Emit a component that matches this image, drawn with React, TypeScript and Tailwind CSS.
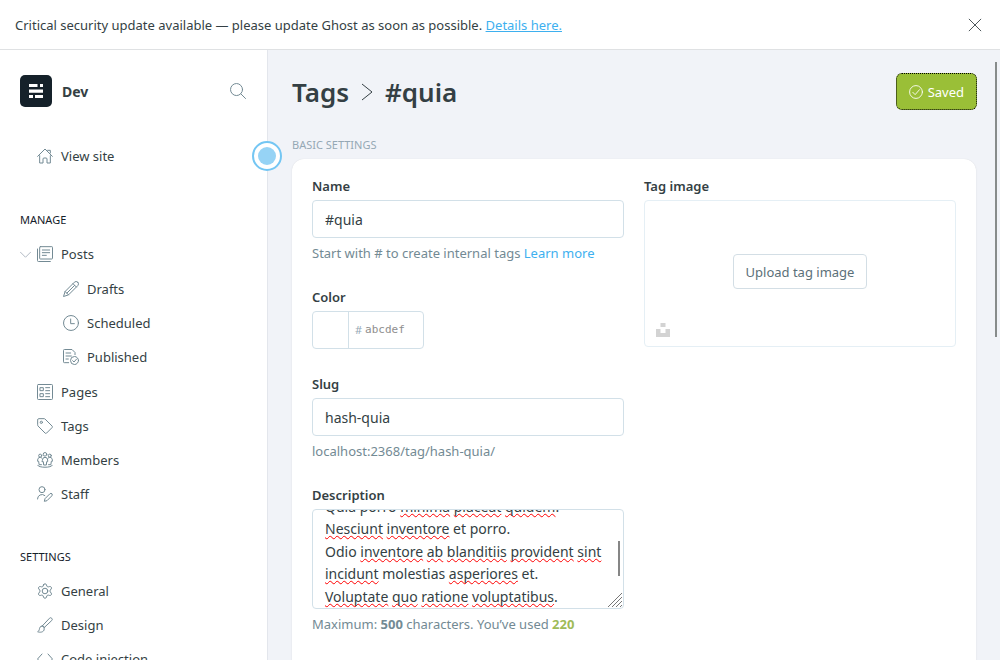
import { useLayoutEffect, useRef, useState } from "react";
import type { ReactNode } from "react";

type IconProps = { children: ReactNode; className?: string };

function Icon({ children, className = "size-4" }: IconProps) {
  return (
    <svg
      viewBox="0 0 24 24"
      fill="none"
      stroke="currentColor"
      strokeWidth="1.5"
      strokeLinecap="round"
      strokeLinejoin="round"
      aria-hidden="true"
      className={`shrink-0 ${className}`}
    >
      {children}
    </svg>
  );
}

const icons = {
  home: (
    <>
      <path d="M1 12.5 12 1.5l11 11" />
      <path d="M4 11.5V22.5h5v-6a1.5 1.5 0 0 1 1.500-1.500h3a1.500 1.500 0 0 1 1.500 1.500v6h5V11.500" />
      <path d="M16 3.500h4v4" />
    </>
  ),
  posts: (
    <>
      <rect x="4" y="1" width="19.250" height="18.500" rx="1" />
      <path d="M.75 4.500V22a1.250 1.250 0 0 0 1.250 1.250h18M8 6h11M8 10h11M8 14h6" />
    </>
  ),
  drafts: (
    <>
      <path d="M22.200 1.800a3.600 3.600 0 0 0-5.100 0L3.200 15.700.75 23.250l7.550-2.450L22.200 6.900a3.600 3.600 0 0 0 0-5.100Z" />
      <path d="m15 4 5 5M3.200 15.700l5.100 5.100M5.800 18.200 17.500 6.500" />
    </>
  ),
  scheduled: (
    <>
      <circle cx="12" cy="12" r="11.200" />
      <path d="M11.500 6v7H17" />
    </>
  ),
  published: (
    <>
      <path d="M8.500 20.500H2A1.250 1.250 0 0 1 .75 19.250V2A1.250 1.250 0 0 1 2 .75h11.500L18 5.250V8.500M4.500 6h7M4.500 10.500h8M4.500 15H8" />
      <circle cx="17.250" cy="17.250" r="6" />
      <path d="m14.500 17.500 2 2 3.800-4.300" />
    </>
  ),
  pages: (
    <>
      <rect x=".75" y=".75" width="22.500" height="22.500" rx="1.250" />
      <path d="M5 5.500h4.500V10H5zM5 14.500h4.500V19H5zM13 5.500h6M13 10h6M13 14.500h6M13 19h6" />
    </>
  ),
  tags: (
    <>
      <path d="M1 2.500A1.500 1.500 0 0 1 2.500 1h8.200c.5 0 1 .2 1.400.6L22.700 12.200a1.500 1.500 0 0 1 0 2.100l-8.400 8.400a1.500 1.500 0 0 1-2.100 0L1.600 12.100c-.4-.4-.6-.9-.6-1.400Z" />
      <circle cx="6.500" cy="6.500" r="1.700" />
    </>
  ),
  members: (
    <>
      <circle cx="12" cy="3.500" r="2.700" />
      <circle cx="4.800" cy="5.500" r="2.300" />
      <circle cx="19.200" cy="5.500" r="2.300" />
      <path d="M8 12a4 4 0 0 1 8 0v2.500h-1.500L14 19.500h-4l-.5-5H8ZM7 8.800a3.700 3.700 0 0 0-6 3v2.200h1.500l.7 5h3.500M17 8.800a3.700 3.700 0 0 1 6 3v2.200h-1.500l-.7 5h-3.500M1 20c1 4 21 4 22 0" />
    </>
  ),
  staff: (
    <>
      <circle cx="7.500" cy="5.500" r="4.500" />
      <path d="M.75 19.500a6.750 6.750 0 0 1 11-5.200M22.300 11.700a2.100 2.100 0 0 0-3 0l-7.300 7.300-1 4 4-1 7.300-7.300a2.100 2.100 0 0 0 0-3Z" />
    </>
  ),
  general: (
    <>
      <path d="m9.800 2.700-.5 1.800c-.3 1-1.400 1.600-2.400 1.300L5 5.300c-2.100-.5-3.700 2.100-2.200 3.700l1.300 1.600c.7.800.7 2 0 2.800L2.800 15c-1.500 1.600.1 4.200 2.200 3.700l1.900-.5c1-.3 2.100.3 2.400 1.300l.5 1.800c.6 2.100 3.800 2.100 4.400 0l.5-1.800c.3-1 1.400-1.600 2.400-1.300l1.900.5c2.100.5 3.700-2.100 2.200-3.700l-1.300-1.600c-.7-.8-.7-2 0-2.800L21.200 9c1.500-1.600-.1-4.200-2.200-3.700l-1.900.5c-1 .3-2.100-.3-2.400-1.300l-.5-1.800c-.6-2.100-3.800-2.100-4.400 0Z" />
      <circle cx="12" cy="12" r="4.200" />
    </>
  ),
  design: (
    <>
      <path d="M8.500 12.800 18.700 1.900a2.400 2.400 0 0 1 3.400 3.400L11.200 15.500M8.500 12.800l2.700 2.700M7.800 13.500a4.100 4.100 0 0 0-4 3.600c-.3 2.200-.8 3.900-2.800 5 2.500 1.300 9.800 1.300 9.800-4.200 0-2.400-1.300-4.200-3-4.400Z" />
    </>
  ),
  code: <path d="m7.500 4.500-6.700 7.500 6.700 7.500M16.500 4.500l6.700 7.500-6.700 7.500" />,
};

type Item = { label: string; icon: keyof typeof icons; children?: Item[] };

const manage: Item[] = [
  {
    label: "Posts",
    icon: "posts",
    children: [
      { label: "Drafts", icon: "drafts" },
      { label: "Scheduled", icon: "scheduled" },
      { label: "Published", icon: "published" },
    ],
  },
  { label: "Pages", icon: "pages" },
  { label: "Tags", icon: "tags" },
  { label: "Members", icon: "members" },
  { label: "Staff", icon: "staff" },
];

const settings: Item[] = [
  { label: "General", icon: "general" },
  { label: "Design", icon: "design" },
  { label: "Code injection", icon: "code" },
];

function NavItem({ label, icon, children }: Item) {
  return (
    <li>
      <div className="flex h-[34px] items-center pl-5">
        <span className="flex w-[17px] shrink-0 items-center text-[#abb4be]">
          {children && (
            <button type="button" aria-label={`Collapse ${label}`} className="flex">
              <Icon className="size-[11px]">
                <path strokeWidth="2" d="M1 7l11 11L23 7" />
              </Icon>
            </button>
          )}
        </span>
        <a href="#" className="flex items-center gap-2">
          <Icon className="size-4 text-[#738a94]">{icons[icon]}</Icon>
          <span className="pt-0.5">{label}</span>
        </a>
      </div>
      {children && (
        <ul className="py-px pl-[26px]">
          {children.map((child) => (
            <NavItem key={child.label} {...child} />
          ))}
        </ul>
      )}
    </li>
  );
}

function NavGroup({ title, items }: { title: string; items: Item[] }) {
  return (
    <section>
      <h2 className="flex h-[34px] items-center pl-5 text-[11px] text-[#15212a]">{title}</h2>
      <ul>
        {items.map((item) => (
          <NavItem key={item.label} {...item} />
        ))}
      </ul>
    </section>
  );
}

const description = [
  ["Quia porro ", "*minima", " ", "*placeat", " ", "*quidem", "."],
  ["*Nesciunt", " ", "*inventore", " et porro."],
  ["Odio ", "*inventore", " ", "*ab", " ", "*blanditiis", " ", "*provident", " ", "*sint", " ", "*incidunt", " molestias ", "*asperiores", " et."],
  ["*Voluptate", " ", "*quo", " ", "*ratione", " ", "*voluptatibus", "."],
];

const descriptionText = description.map((l) => l.map((w) => w.replace("*", "")).join("")).join("\n");

function DescriptionBox() {
  const area = useRef<HTMLTextAreaElement>(null);
  const marks = useRef<HTMLDivElement>(null);
  const [text, setText] = useState(descriptionText);

  const sync = () => {
    if (area.current && marks.current) marks.current.scrollTop = area.current.scrollTop;
  };

  useLayoutEffect(() => {
    if (area.current) area.current.scrollTop = 22;
    sync();
  }, []);

  return (
    <div className="relative h-[100px] overflow-hidden rounded border border-[#d2e0e8] bg-white text-sm leading-[1.6]">
      <div
        ref={marks}
        aria-hidden="true"
        className="absolute inset-0 overflow-hidden px-3 py-2 whitespace-pre-wrap text-transparent"
      >
        {text === descriptionText &&
          description.map((line, i) => (
            <div key={i}>
              {line.map((w, j) =>
                w.startsWith("*") ? (
                  <span key={j} className="underline decoration-[#ff0000] decoration-wavy decoration-1 underline-offset-1 [text-decoration-skip-ink:none]">
                    {w.slice(1)}
                  </span>
                ) : (
                  w
                ),
              )}
            </div>
          ))}
      </div>
      <textarea
        id="description"
        ref={area}
        value={text}
        onChange={(e) => setText(e.target.value)}
        onScroll={sync}
        spellCheck={false}
        className="relative block size-full resize-none bg-transparent px-3 py-2 outline-none [scrollbar-width:none]"
      />
      <span className="absolute top-[31px] right-[3px] h-[35px] w-0.5 bg-[#868686]" />
      <svg viewBox="0 0 14 14" className="absolute right-px bottom-px size-3.5" stroke="#777" fill="none" aria-hidden="true">
        <path d="M0 14 14 0M4 14 14 4M8 14l6-6M12 14l2-2" />
      </svg>
    </div>
  );
}

const labelClass = "mb-1 block h-5 text-[13px] leading-5 font-semibold";
const inputClass = "block h-[38px] w-full rounded border border-[#d2e0e8] bg-white px-3 text-sm outline-none";
const hintClass = "mt-1.5 text-[13px] leading-[18px] text-[#738a94]";

export default function App() {
  return (
    <div className="flex h-screen flex-col overflow-hidden bg-white font-['Noto_Sans','Open_Sans',sans-serif] text-[13px] text-[#343f44]">
      <aside className="flex h-[50px] shrink-0 items-center justify-between border-b border-[#dfe1e3] pr-[18px] pl-[15px]">
        <p className="pt-0.5">
          Critical security update available — please update Ghost as soon as possible.{" "}
          <a href="#" className="text-[#3eb0ef] underline">Details here.</a>
        </p>
        <button type="button" aria-label="Dismiss">
          <Icon className="size-3.5">
            <path d="M2 2l20 20M22 2 2 22" />
          </Icon>
        </button>
      </aside>

      <div className="flex min-h-0 grow">
        <nav className="relative flex w-[268px] shrink-0 flex-col border-r border-[#e3e6ec]">
          <header className="flex items-center pt-[25px] pr-[21px] pl-5">
            <svg viewBox="0 0 32 32" className="size-8" aria-hidden="true">
              <rect width="32" height="32" rx="5" fill="#15212a" />
              <path fill="#fff" d="M9 9h8.500v3H9zM20 9h3v3h-3zM9 14.500h14v3.200H9zM9 20h4v3H9zM15 20h8v3h-8z" />
            </svg>
            <span className="ml-2.5 grow pt-0.5 text-sm font-bold">Dev</span>
            <button type="button" aria-label="Search" className="text-[#738a94]">
              <Icon className="size-4">
                <circle cx="9.800" cy="9.800" r="9" />
                <path d="m16.300 16.300 7 7" />
              </Icon>
            </button>
          </header>
          <div className="min-h-0 grow overflow-y-auto pt-8 [scrollbar-width:none]">
            <ul>
              <NavItem label="View site" icon="home" />
            </ul>
            <div className="mt-[30px] flex flex-col gap-[29px]">
              <NavGroup title="MANAGE" items={manage} />
              <NavGroup title="SETTINGS" items={settings} />
            </div>
          </div>
          <span className="absolute top-[91px] -right-[15px] z-10 flex size-[30px] items-center justify-center rounded-full border-2 border-[#74c6f3] bg-white">
            <span className="size-[18px] rounded-full bg-[#96d3f5]" />
          </span>
        </nav>

        <main className="relative min-w-0 grow bg-[#f1f3f8]">
          <form className="h-full overflow-y-auto px-6 pt-[23px] [scrollbar-width:none]" onSubmit={(e) => e.preventDefault()}>
            <header className="flex h-[37px] items-center justify-between">
              <h1 className="flex items-center gap-3 text-[26px] leading-9 font-semibold">
                <a href="#">Tags</a>
                <svg viewBox="0 0 12 18" className="h-[18px] w-3" fill="none" stroke="currentColor" aria-hidden="true">
                  <path d="M1 1l10 8-10 8" />
                </svg>
                #quia
              </h1>
              <button
                type="submit"
                className="-mr-px flex h-[37px] items-center gap-[5px] rounded-md border border-dotted border-black bg-[#9abf37] px-3 text-white"
              >
                <Icon className="size-3.5">
                  <circle cx="12" cy="12" r="11" />
                  <path d="m6.500 12.500 4 4L18 8" />
                </Icon>
                <span className="pt-0.5">Saved</span>
              </button>
            </header>

            <h2 className="mt-[25px] text-[11px] leading-5 text-[#95a8b5]">BASIC SETTINGS</h2>

            <div className="mt-1 grid grid-cols-2 gap-5 rounded-xl bg-white px-5 pt-[17px] pb-16 shadow-[0_0_1px_rgba(0,0,0,0.1),0_1px_3px_rgba(0,0,0,0.05)]">
              <div className="flex flex-col gap-[25px]">
                <div>
                  <label htmlFor="name" className={labelClass}>Name</label>
                  <input id="name" type="text" defaultValue="#quia" className={inputClass} />
                  <p className={hintClass}>
                    Start with # to create internal tags <a href="#" className="text-[#3eb0ef]">Learn more</a>
                  </p>
                </div>
                <div>
                  <label htmlFor="color" className={labelClass}>Color</label>
                  <div className="flex h-[38px] w-28 items-center overflow-hidden rounded border border-[#d2e0e8]">
                    <span className="h-full w-9 shrink-0 border-r border-[#d2e0e8]" />
                    <span className="pl-1.5 text-[11px] text-[#95a8b5]">#</span>
                    <input
                      id="color"
                      type="text"
                      placeholder="abcdef"
                      className="w-full min-w-0 pl-[3px] font-['DejaVu_Sans_Mono',monospace] text-[11px] outline-none placeholder:text-[#8e8e8e]"
                    />
                  </div>
                </div>
                <div>
                  <label htmlFor="slug" className={labelClass}>Slug</label>
                  <input id="slug" type="text" defaultValue="hash-quia" className={inputClass} />
                  <p className={hintClass}>localhost:2368/tag/hash-quia/</p>
                </div>
                <div>
                  <label htmlFor="description" className={labelClass}>Description</label>
                  <DescriptionBox />
                  <p className={hintClass}>
                    Maximum: <b>500</b> characters. You’ve used <b className="text-[#9fbb58]">220</b>
                  </p>
                </div>
              </div>
              <div>
                <label htmlFor="tag-image" className={labelClass}>Tag image</label>
                <div className="relative flex h-[147px] items-center justify-center rounded border border-[#e5eff5] pb-1">
                  <button
                    id="tag-image"
                    type="button"
                    className="h-[35px] rounded border border-[#d3dee5] px-3 pt-0.5 text-[#5b7079]"
                  >
                    Upload tag image
                  </button>
                  <button type="button" aria-label="Unsplash" className="absolute bottom-[9px] left-[11px] text-[#d3d3d3]">
                    <svg viewBox="0 0 14 14" className="size-3.5" fill="currentColor" aria-hidden="true">
                      <path d="M4.500 0h5v4h-5zM0 6h4.500v4h5V6H14v8H0z" />
                    </svg>
                  </button>
                </div>
              </div>
            </div>
          </form>
          <span className="absolute top-3 right-[3px] h-[275px] w-0.5 bg-[#878b8b]" />
        </main>
      </div>
    </div>
  );
}
